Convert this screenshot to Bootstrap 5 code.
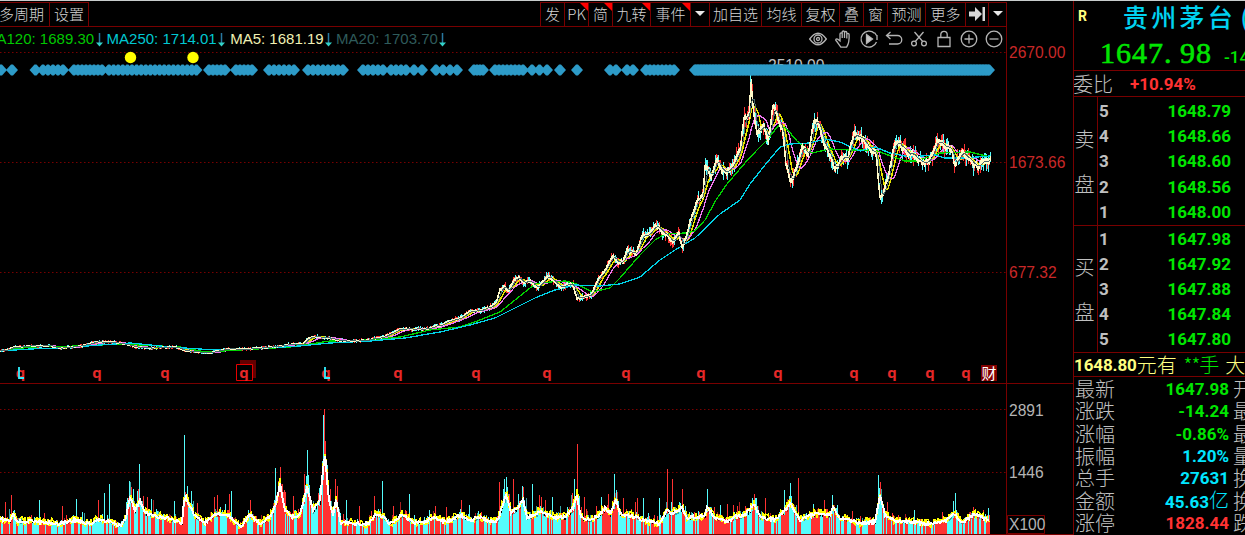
<!DOCTYPE html>
<html lang="zh-CN">
<head>
  <meta charset="UTF-8">
  <meta name="viewport" content="width=device-width, initial-scale=1.0">
  <title>贵州茅台</title>
  <link href="https://cdn.jsdelivr.net/npm/bootstrap@5.3.0/dist/css/bootstrap.min.css" rel="stylesheet">
  <style>
    :root { --rule: #780000; --up: #ff3232; --down: #00e600; --cy: #00e6ff; --txt: #c0c0c0; }
    body { width: 1245px; height: 535px; background: #000; color: var(--txt); border-top: 1px solid #c8cccc;
      font-family: "Liberation Sans", "Noto Sans CJK SC", sans-serif; line-height: 1; overflow: hidden; }
    svg { display: block; overflow: visible; }
    .left-pane { width: 1073px; flex: none; }
    .toolbar { height: 26px; border-bottom: 1px solid var(--rule); padding-top: 1px;
      font: 300 15px/23px "Noto Sans CJK SC", sans-serif; color: #d4d4d4; width: 1007px; }
    .tool { border-left: 1px solid var(--rule); border-top: 1px solid var(--rule); display: flex; align-items: center;
      justify-content: center; position: relative; white-space: nowrap; height: 24px; padding-bottom: 2px; }
    .tools-a { display: grid; grid-template-columns: 56px 39px; margin-left: -7px; border-right: 1px solid var(--rule); }
    .tools-b { display: grid; grid-template-columns: 24px 24px 24px 38px 40px 19px 52px 40px 38px 24px 24px 38px 40px 23px 18px;
      border-right: 1px solid var(--rule); }
    .hot::after { content: ""; position: absolute; top: 0; right: 0; border: 4px solid red; border-left-color: transparent; border-bottom-color: transparent; }
    .caret { border: 5px solid transparent; border-top-color: #e8e8e8; border-bottom: 0; }
    .indicators { width: 1007px; height: 23px; border-right: 1px solid var(--rule); font-size: 15px; overflow: hidden; }
    .ma { white-space: nowrap; display: flex; align-items: center; }
    .ma svg { margin: 2px 4px 0 1.5px; }
    .icons { gap: 7.1px; margin-right: 3px; padding-top: 1px; }
    .icons svg { width: 18px; height: 18px; fill: none; stroke: #b4b4b4; stroke-width: 1.3; }
    .quote { width: 172px; border-left: 1px solid var(--rule); overflow: hidden; height: 534px; font-family: Roboto, "Noto Sans CJK SC", sans-serif; }
    .quote > * { white-space: nowrap; }
    .cjk { font: 300 20px/20px "Noto Sans CJK SC", sans-serif; flex: none; }
    .num { font: 700 17px/20px Roboto, sans-serif; flex: none; }
    .up { color: var(--up); } .down { color: var(--down); } .cy { color: var(--cy); } .yl { color: #ffff80; }
    .headbox { height: 70px; border-bottom: 1px solid var(--rule); }
    .flag { font-size: 14px; margin-left: 4px; width: 9px; }
    .stock { font: 500 25px/30px "Noto Sans CJK SC", sans-serif; letter-spacing: 3.3px; color: #00d2f0; margin-left: 36px; }
    .price { font: 30px/34px "Liberation Serif", serif; letter-spacing: 1px; -webkit-text-stroke: .6px var(--down); margin: 5px 0 0 26px; flex: none; }
    .price i { display: inline-block; width: 16px; font-style: normal; }
    .chg { font-weight: 500; margin: 13px 0 0 12px; }
    .weibi { height: 26px; border-bottom: 1px solid var(--rule); }
    .weibi .cjk { margin-left: -1px; }
    .weibi .num { margin-left: 17px; }
    .book { border-bottom: 1px solid var(--rule); }
    .side { width: 24px; border-right: 1px solid var(--rule); padding-right: 2px; gap: 25px; }
    .lvl { height: 25.3px; padding: 0 14px 0 1px; }
    .asks { padding-top: 1px; }
    .asks .side { margin-top: -1px; }
    .bids .lvl { height: 25.2px; }
    .tip { height: 24px; border-bottom: 1px solid var(--rule); letter-spacing: -.1px; }
    .tip .down { margin-left: 7px; letter-spacing: -1px; }
    .tip .last { margin-left: 7px; }
    .stat { height: 22.45px; padding-top: 1px; }
    .stat .lab { width: 41px; margin-left: 1px; }
    .stat > .num { width: 114px; text-align: right; padding-right: 1px; }
    .stat .next { margin-left: 3px; }
  </style>
  <script src="https://cdn.jsdelivr.net/npm/bootstrap@5.3.0/dist/js/bootstrap.bundle.min.js"></script>
</head>
<body>
  <div class="d-flex">
    <main class="left-pane">
      <div class="toolbar d-flex justify-content-between">
        <div class="tools-a"><div class="tool">多周期</div><div class="tool">设置</div></div>
        <div class="tools-b">
          <div class="tool">发</div><div class="tool hot">PK</div><div class="tool hot">简</div><div class="tool hot">九转</div>
          <div class="tool hot">事件</div><div class="tool"><span class="caret"></span></div>
          <div class="tool">加自选</div><div class="tool">均线</div><div class="tool">复权</div><div class="tool">叠</div>
          <div class="tool">窗</div><div class="tool">预测</div><div class="tool">更多</div>
          <div class="tool"><svg width="16" height="14"><path d="M0 4.500h6V0l7 7-7 7V9.500H0zM13.500 0H16v14h-2.500z" fill="#d8d8d8"/></svg></div>
          <div class="tool"><span class="caret"></span></div>
        </div>
      </div>

      <div class="indicators d-flex justify-content-between align-items-center">
        <div class="d-flex" id="maRow"></div>
        <div class="icons d-flex" id="iconRow"></div>
      </div>

      <svg id="kline" width="1073" height="334" viewBox="0 50 1073 334"></svg>
      <svg id="volume" width="1073" height="151" viewBox="0 384 1073 151"></svg>
    </main>

    <aside class="quote">
      <div class="headbox">
        <div class="d-flex align-items-center">
          <b class="yl flag">R</b><span class="stock">贵州茅台<span class="ms-1">(</span></span>
        </div>
        <div class="d-flex align-items-center down">
          <span class="price">1647<i>.</i>98</span><span class="num chg">-14.24</span>
        </div>
      </div>
      <div class="weibi d-flex align-items-center"><span class="cjk">委比</span><span class="num up">+10.94%</span></div>
      <div id="books"></div>
      <div class="tip d-flex align-items-center yl">
        <span class="num">1648.80</span><span class="cjk">元有</span><span class="cjk down">**手</span><span class="cjk last">大</span>
      </div>
      <div id="stats"></div>
    </aside>
  </div>

  <script>
    // moving average captions
    const maItems = [["MA120: 1689.30", "#00c800", -16], ["MA250: 1714.01", "#00c8d2", 0], ["MA5: 1681.19", "#f0f0b4", 1], ["MA20: 1703.70", "#2f5b5b", 0]];
    const arrow = '<svg width="7" height="14"><path d="M3.500 0v11" stroke="#2878a0" stroke-width="1.500"/><path d="M0 9.500l3.500 4 3.500-4z" fill="#32d2c8"/></svg>';
    document.getElementById("maRow").innerHTML = maItems.map(m =>
      `<span class="ma" style="color:${m[1]};margin-left:${m[2]}px">${m[0]}${arrow}</span>`).join("");

    // chart tools
    const icons = [
      '<path d="M.700 9Q9-2.500 17.300 9 9 20.500.700 9z"/><circle cx="9" cy="9" r="4"/><circle cx="9" cy="9" r="1.500"/>',
      '<path d="M7 17.200C5 15 3.800 12.500 2 10.500c-.8-1 .7-2.200 1.800-1.300L6 11V4c0-1.600 2.200-1.600 2.200 0v4V2.200c0-1.600 2.300-1.600 2.300 0V8 2.700c0-1.600 2.300-1.600 2.300 0V8.500 4.500c0-1.500 2.300-1.500 2.300 0 .3 5-.1 9-2.500 12.700z"/>',
      '<path d="M16.500 12A8 8 0 1 1 14.500 3.200M17 5v5M14.500 2.500l2 3"/><path d="M6.500 4.500v9l6-4.500z" fill="#c8c8c8"/>',
      '<path d="M5.500 2L1.500 5.500l4 3.500M2 5.500h10.500a3.800 3.800 0 0 1 0 8.500H4"/>',
      '<circle cx="4" cy="13.500" r="2.400"/><circle cx="14" cy="13.500" r="2.400"/><path d="M5.300 11.500L13.500 2M12.700 11.500L4.500 2"/>',
      '<path d="M3 7.500h12v9H3zM5.800 7.500V4.500a3.200 3.200 0 0 1 6.400 0v3"/>',
      '<circle cx="9" cy="9" r="7.800"/><path d="M9 4.500v9M4.500 9h9"/>',
      '<circle cx="9" cy="9" r="7.800"/><path d="M4.500 9h9"/>'];
    document.getElementById("iconRow").innerHTML = icons.map(p => `<svg viewBox="0 0 18 18">${p}</svg>`).join("");

    // order book and figures
    const asks = [[5, "1648.79"], [4, "1648.66"], [3, "1648.60"], [2, "1648.56"], [1, "1648.00"]];
    const bids = [[1, "1647.98"], [2, "1647.92"], [3, "1647.88"], [4, "1647.84"], [5, "1647.80"]];
    const book = (cls, name, rows, h) => `
      <div class="book ${cls} d-flex" style="height:${h}px">
        <div class="side d-flex flex-column justify-content-center align-items-center cjk"><span>${name}</span><span>盘</span></div>
        <div class="flex-grow-1">${rows.map(r => `<div class="lvl d-flex justify-content-between align-items-center">
          <span class="num">${r[0]}</span><span class="num down">${r[1]}</span></div>`).join("")}</div>
      </div>`;
    document.getElementById("books").innerHTML = book("asks", "卖", asks, 129) + book("bids", "买", bids, 127);
    const stats = [["最新", "1647.98", "down", "开"], ["涨跌", "-14.24", "down", "最"], ["涨幅", "-0.86%", "down", "最"], ["振幅", "1.20%", "cy", "量"],
      ["总手", "27631", "cy", "换"], ["金额", "45.63亿", "cy", "换"], ["涨停", "1828.44", "up", "跌"]];
    document.getElementById("stats").innerHTML = stats.map(s => `<div class="stat d-flex align-items-center">
      <span class="cjk lab">${s[0]}</span><span class="num ${s[2]}">${s[1].replace("亿", '<span class="cjk">亿</span>')}</span><span class="cjk next">${s[3]}</span></div>`).join("");

    // seeded noise so the series is the same on every load
    let seed = 77;
    const rnd = () => (seed = (seed * 16807) % 2147483647) / 2147483647;
    const parse = s => s.split(" ").map(p => p.split(",").map(Number));
    function at(pts, x) {
      let i = 1;
      while (i < pts.length - 1 && pts[i][0] < x) i++;
      const [a, b] = [pts[i - 1], pts[i]];
      return a[1] + (b[1] - a[1]) * (x - a[0]) / (b[0] - a[0]);
    }
    const line = (pts, c, w = 1.3) => `<polyline points="${pts.map(p => p[0] + "," + p[1].toFixed(1)).join(" ")}" fill="none" stroke="${c}" stroke-width="${w}"/>`;
    const grid = ys => ys.map(y => `<path d="M0 ${y}H1006" stroke="#780000" stroke-dasharray="1.500 2.500"/>`).join("");

    const price = parse("0,351 8,350 14,347 30,346 50,346 60,348 80,346 95,342 110,342 124,344 135,347 150,348 175,347 185,351 210,353 225,349 250,349 275,347 288,344 303,344 308,338 316,336 325,338 345,341 370,340 385,336 400,329 410,329 425,329 440,325 450,322 462,317 472,310 480,311 490,307 496,303 500,290 504,286 508,292 514,281 518,277 523,282 530,282 537,288 543,282 547,276 553,280 561,287 567,285 573,284 577,299 583,297 591,295 596,283 604,272 609,262 613,254 618,263 623,262 627,248 631,252 636,254 641,237 650,231 655,226 664,233 672,242 679,234 682,248 690,222 696,205 703,195 705,167 711,178 717,160 722,172 727,170 733,165 740,152 744,120 749,115 751,82 754,118 757,138 763,125 768,143 773,106 778,120 783,132 786,165 792,183 797,168 802,145 808,158 813,124 817,118 820,130 825,145 831,160 835,168 842,158 848,158 854,130 862,140 871,150 876,153 880,198 886,182 893,152 897,143 903,148 912,155 925,165 930,158 938,142 945,146 951,150 955,165 962,150 970,162 977,168 985,156 990,159");
    const green = parse("0,351 30,347 80,346 120,344 180,347 205,352 240,350 290,347 330,341 370,340 400,337 430,330 460,327 480,320 500,312 515,300 535,284 550,282 565,281 577,284 592,292 610,288 620,278 640,255 655,240 665,234 685,233 695,231 705,220 716,200 727,184 745,163 757,150 768,139 778,126 786,128 797,141 812,153 830,149 850,150 875,150 888,155 905,161 917,161 940,153 970,152 990,157");
    const cyan = parse("0,351 30,349 60,348 100,345 130,343 170,347 215,350 250,349 300,346 330,343 370,341 405,338 440,332 470,325 495,318 515,308 535,298 555,290 575,285 600,286 620,284 640,277 660,260 675,250 695,238 720,214 740,200 750,184 765,165 780,147 790,144 810,143 825,139 840,142 860,151 875,147 890,153 910,157 935,155 945,158 965,158 990,156");

    // candles drawn one pixel wide, body over wick
    let close = [], bars = "", bodies = "", wob = 0;
    for (let x = 0; x <= 990; x++) {
      const y = at(price, x), amp = Math.min(11, 1.2 + (353 - y) / 22);
      wob = wob * .6 + (rnd() - .5) * amp * .5;
      const c = y + wob;
      close.push([x, c]);
      const hi = c - rnd() * amp - .5, lo = c + rnd() * amp + .5;
      bars += `<path d="M${x}.500 ${hi.toFixed(1)}V${lo.toFixed(1)}" stroke="${rnd() < .5 ? "#ff3232" : "#54fcfc"}"/>`;
      bodies += `<path d="M${x}.500 ${(c - amp * .22 - .5).toFixed(1)}V${(c + amp * .22 + .5).toFixed(1)}" stroke="#fffac8"/>`;
    }
    const avg = n => close.map((p, i) => {
      const s = close.slice(Math.max(0, i - n + 1), i + 1);
      return [p[0], s.reduce((t, q) => t + q[1], 0) / s.length];
    });
    bars += `<path d="M750.500 74v18" stroke="#54fcfc"/>`;

    // diamond runs: first centre, last centre, spacing
    const runs = [[1, 1, 9], [12, 13, 2], [35.500, 35.500, 9], [43, 65, 5], [74, 105, 4], [109, 200, 4.600], [209, 228, 4], [236, 254, 4], [269, 294, 5], [308, 347, 5], [363, 385, 5],
      [391, 401, 5], [406, 427, 8], [436, 462, 7], [474, 485, 3], [495, 525, 4], [532, 548, 7.500], [560, 560, 9], [577, 577, 9], [610, 616, 6], [627, 633, 6], [646, 675, 4], [695, 990, 1.500]];
    let dia = "";
    runs.forEach(([a, b, s]) => {
      for (let x = a; x <= b + .1; x += s) dia += `<path d="M${x - 6} 70l5-5.500h2l5 5.500-5 5.500h-2z" fill="#2d9bc8"/>`;
    });
    const qs = [20.500, 97, 165, 244, 326, 398, 476, 547, 626, 701, 778, 854, 892, 930, 966];
    const q = x => `<text x="${x}" y="378" text-anchor="middle" font-family="Open Sans" font-weight="700" font-size="15" fill="#e62828">q</text>`;
    const axisText = (y, t, c) => `<text x="1009" y="${y}" font-size="15.600" fill="${c}">${t}</text>`;

    document.getElementById("kline").innerHTML = grid([52.5, 162.5, 272.5]) +
      `<text x="768" y="71" font-size="15.600" fill="#c0c0c0">2510.00</text>` +
      `<g shape-rendering="crispEdges">${bars}` + line(avg(9), "#e6e600", 1.5) + line(avg(17), "#f078f0") +
      line(green, "#00d200") + line(cyan, "#00d2e6") + bodies + line(close, "#fffac8", 1.5) + line(avg(5), "#48686a", 1) + `</g>` + dia +
      `<circle cx="130.500" cy="57.500" r="5.700" fill="#ff0"/><circle cx="193" cy="57.500" r="5.700" fill="#ff0"/>` +
      `<path d="M240 360h16v18h-16z" fill="#640000"/><path d="M236.500 364.500h16v16h-16z" fill="#000" stroke="#e60000"/>` + qs.map(q).join("") +
      [20, 326].map(x => `<path d="M${x - 1} 367v11h5" fill="none" stroke="#32f0ff" stroke-width="1.800"/>`).join("") +
      `<path d="M981 365h16v16h-16z" fill="#820000"/><text x="981.500" y="379" font-size="15" fill="#fff" font-family="Noto Sans CJK SC">财</text>` +
      `<path d="M0 383.500H1073M1006.500 50V384" stroke="#780000"/>` +
      axisText(58, "2670.00", "#c82828") + axisText(168, "1673.66", "#c82828") + axisText(278, "677.32", "#c82828");

    // volume: average level by x, plus the single tall bars [x, top, colour]
    const level = parse("0,519 10,521 13,514 18,522 30,521 50,523 58,524 75,520 90,524 98,519 110,522 120,526 126,518 130,497 135,510 140,500 145,513 155,516 170,519 182,523 184,502 186,498 195,516 205,523 215,514 228,515 240,527 250,515 260,524 270,517 276,505 280,484 285,510 292,517 300,515 307,487 313,510 320,500 323,470 325,455 329,500 333,514 336,500 341,523 350,523 360,524 368,524 375,515 382,516 390,524 402,515 415,523 425,522 433,517 445,522 460,515 470,520 480,517 490,522 498,520 501,510 506,494 511,512 518,507 523,500 527,517 535,515 540,511 548,515 555,518 565,517 573,508 577,495 581,518 590,520 600,515 605,508 610,514 616,500 620,514 635,517 650,522 660,524 667,510 672,514 678,510 682,507 687,518 705,516 707,508 715,517 727,522 735,517 745,515 754,504 760,517 775,520 785,510 790,504 800,520 815,514 830,515 833,508 840,518 860,523 875,522 880,495 885,515 895,521 910,522 930,524 945,521 955,514 962,523 975,514 983,518 990,520");
    const spikes = "5,502,r 11,495,r 39,500,c 62,506,r 76,499,c 98,500,r 104,493,c 109,484,c 126,502,c 129,481,c 133,489,c 139,464,c 147,497,r 151,499,c 174,501,c 184,435,c 187,486,c 191,491,c 197,503,r 214,497,r 217,495,r 229,494,r 231,491,c 250,500,r 275,468,c 278,481,r 280,467,r 285,492,r 293,496,r 304,474,r 307,450,c 308,475,c 319,488,c 322,461,c 323,415,c 324,409,r 325,441,r 327,465,c 335,479,r 337,486,r 346,500,c 374,496,r 382,481,c 359,506,r 393,506,r 409,494,c 446,507,r 461,500,r 499,482,r 504,479,c 506,477,c 513,479,r 518,494,c 523,487,r 532,484,c 539,495,r 545,500,r 552,497,c 572,493,r 574,479,c 577,444,r 584,497,r 614,474,c 616,490,c 601,497,c 608,494,r 623,498,r 637,498,r 643,498,c 667,469,r 672,479,r 682,489,r 659,498,c 707,489,c 720,505,c 727,504,r 733,505,r 752,498,c 755,498,c 765,498,r 784,490,c 790,483,c 798,478,r 813,504,c 832,495,c 878,475,c 880,482,r 887,502,r 914,510,c 953,501,c 955,493,c 973,507,r 983,510,r 988,508,c".split(" ").map(s => s.split(","));
    const vcol = { r: "#ff3232", c: "#54fcfc" };
    let tall = "", low = "", white = [], yellow = [], side = "r";
    for (let x = 0; x < 990; x++) {
      if (rnd() < .33) side = side === "r" ? "c" : "r";
      const h = 534 - at(level, x), k = .8 + rnd() * .6 + (rnd() < .15 ? rnd() * .7 : 0);
      const top = 534 - Math.min(h * k, h + 15);
      tall += `<path d="M${x}.500 534V${top.toFixed(1)}" stroke="${vcol[side]}" opacity="${rnd() < .4 ? .65 : 1}"/>`;
      low += `<path d="M${x}.500 534V${(534 - h * .85).toFixed(1)}" stroke="${vcol[side]}"/>`;
      white.push([x, 534 - h + (rnd() - .5) * 3]);
      yellow.push([x, 534 - h * 1.05 + (rnd() - .5) * 8]);
    }
    spikes.forEach(([x, y, c]) => tall += `<path d="M${x}.500 534V${y}" stroke="${vcol[c]}"/>`);
    document.getElementById("volume").innerHTML = grid([409.5, 472.5]) +
      `<g shape-rendering="crispEdges">${tall}${low}${line(yellow, "#ff0", 1.5)}${line(white, "#fff", 2)}</g>` +
      `<path d="M0 534.500H1073M1006.500 384V535M1007.500 515.500h37v18h-37z" fill="none" stroke="#780000"/>` +
      axisText(415.5, "2891", "#b4b4b4") + axisText(478, "1446", "#b4b4b4") + axisText(530, "X100", "#b4b4b4");
  </script>
</body>
</html>
